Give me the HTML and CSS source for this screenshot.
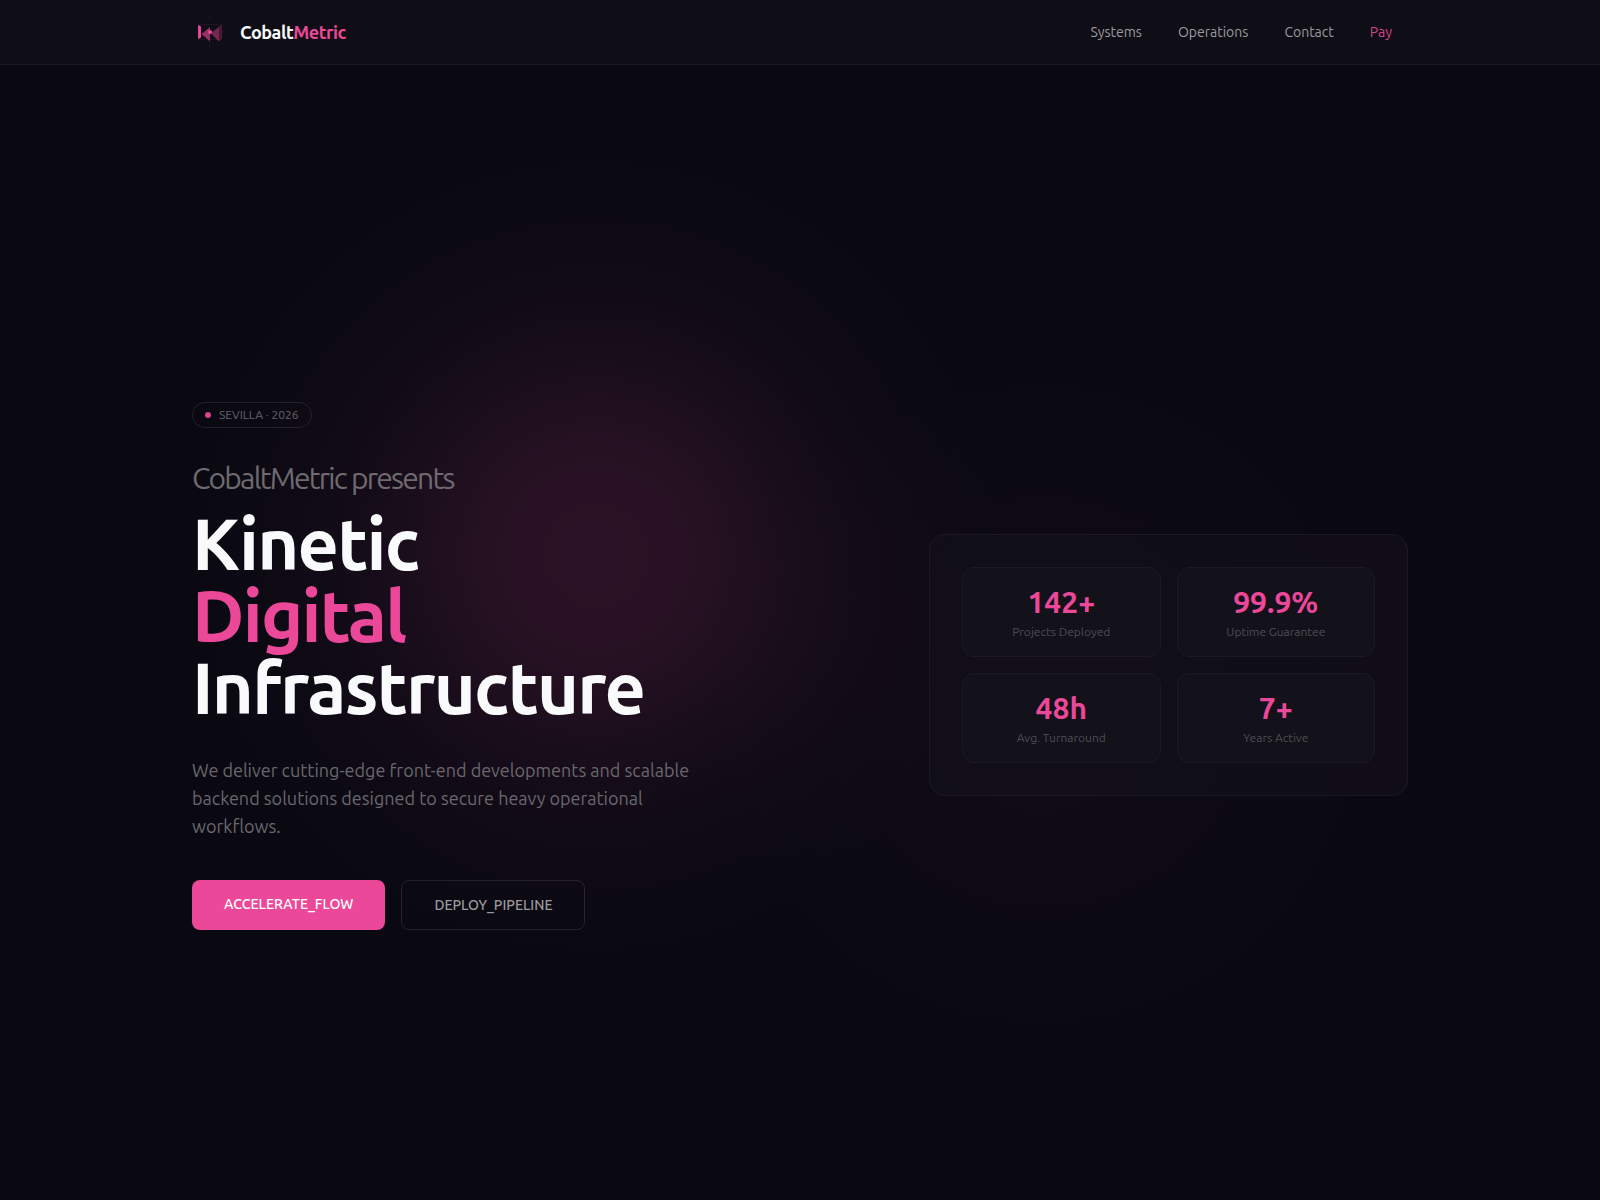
FILE: index.html
```html
<!DOCTYPE html>
<html lang="en">
<head>
<meta charset="utf-8">
<meta name="viewport" content="width=device-width, initial-scale=1">
<title>CobaltMetric</title>
<link rel="stylesheet" href="styles.css">
</head>
<body>
<header class="site-header">
  <div class="container header-row">
    <a class="brand" href="#">
      <svg class="brand-mark" viewBox="0 0 36 36" aria-hidden="true">
        <rect x="8" y="10.500" width="21" height="15" fill="none" stroke="#ec4899" stroke-opacity=".1"/>
        <path d="M18 3v2.500M18 30.500v2.500M3 18h2.500M30.500 18h2.500" stroke="#ec4899" stroke-opacity=".07" stroke-width="2"/>
        <path d="M6 11l3 1.500v11L6 25z" fill="#ec4899"/>
        <path d="M9.500 20L18 13v14.500z" fill="#ec4899" fill-opacity=".6"/>
        <path d="M18.500 19L30 10.500v14L27 27.500z" fill="#ec4899" fill-opacity=".22"/>
        <path d="M19 19.500L27 13v14.500z" fill="#ec4899" fill-opacity=".3"/>
        <circle cx="18" cy="18" r="2" fill="#ec4899"/>
      </svg>
      <span class="brand-name">Cobalt<span class="accent">Metric</span></span>
    </a>
    <nav class="site-nav" aria-label="Main">
      <a href="#systems">Systems</a>
      <a href="#operations">Operations</a>
      <a href="#contact">Contact</a>
      <a class="accent" href="#pay">Pay</a>
    </nav>
  </div>
</header>
<main class="hero">
  <div class="container hero-grid">
    <section class="intro">
      <p class="badge"><span class="badge-dot"></span>SEVILLA · 2026</p>
      <h1 class="title">
        <span class="eyebrow">CobaltMetric presents</span>
        <span class="line">Kinetic</span>
        <span class="line accent">Digital</span>
        <span class="line">Infrastructure</span>
      </h1>
      <p class="lead">We deliver cutting-edge front-end developments and scalable backend solutions designed to secure heavy operational workflows.</p>
      <div class="actions">
        <button class="button primary" type="button">ACCELERATE_FLOW</button>
        <button class="button secondary" type="button">DEPLOY_PIPELINE</button>
      </div>
    </section>
    <dl class="stats">
      <div class="stat"><dd>142+</dd><dt>Projects Deployed</dt></div>
      <div class="stat"><dd>99.9%</dd><dt>Uptime Guarantee</dt></div>
      <div class="stat"><dd>48h</dd><dt>Avg. Turnaround</dt></div>
      <div class="stat"><dd>7+</dd><dt>Years Active</dt></div>
    </dl>
  </div>
</main>
</body>
</html>
```

FILE: styles.css
```css
* { box-sizing: border-box; }

body {
  margin: 0;
  min-height: 100vh;
  display: flex;
  flex-direction: column;
  color: #f9fafb;
  background-color: #0a0912;
  background-image:
    radial-gradient(circle at 596px 556px, rgba(236, 72, 153, .145) 0, rgba(236, 72, 153, .14) 50px, rgba(236, 72, 153, .125) 100px, rgba(236, 72, 153, .098) 150px, rgba(236, 72, 153, .068) 200px, rgba(236, 72, 153, .04) 250px, rgba(236, 72, 153, .018) 300px, rgba(236, 72, 153, .006) 350px, transparent 410px),
    radial-gradient(circle at 1042px 704px, rgba(236, 72, 153, .03) 0, rgba(236, 72, 153, .025) 100px, rgba(236, 72, 153, .012) 200px, rgba(236, 72, 153, .003) 300px, transparent 340px);
  font-family: Ubuntu, "Noto Sans", "Open Sans", sans-serif;
  font-size: 14px;
}

p, h1, dl, dd { margin: 0; }
a { color: inherit; text-decoration: none; }
.accent { color: #ec4899; }

.container {
  width: 100%;
  max-width: 1280px;
  margin: 0 auto;
  padding: 0 32px;
}

.site-header {
  background: #0f0e16;
  border-bottom: 1px solid #1b1a22;
}

.header-row {
  height: 64px;
  display: flex;
  align-items: center;
  justify-content: space-between;
}

.brand { display: flex; align-items: center; gap: 12px; }
.brand-mark { width: 36px; height: 36px; }
.brand-name { font-size: 18px; font-weight: 700; letter-spacing: -0.025em; }

.site-nav { display: flex; gap: 4px; color: #9b9a9f; }
.site-nav a { padding: 8px 16px; line-height: 20px; }
.site-nav .accent { color: #d8438d; }

.hero {
  flex: 1;
  display: flex;
  align-items: center;
  padding: 64px 0 0;
}

.hero-grid {
  display: grid;
  grid-template-columns: minmax(0, 673px) minmax(0, 479px);
  gap: 64px;
  align-items: center;
}

.intro { padding-top: 2px; }

.badge {
  display: flex;
  width: fit-content;
  align-items: center;
  gap: 8px;
  padding: 4px 12px;
  border: 1px solid #242229;
  border-radius: 13px;
  color: #66646b;
  font-size: 12px;
  line-height: 16px;
}
.badge-dot { width: 6px; height: 6px; border-radius: 50%; background: #d8438d; }

.title {
  margin-top: 32px;
  font-size: 72px;
  line-height: 72px;
  font-weight: 700;
  letter-spacing: -0.025em;
}
.title span { display: block; }
.title .eyebrow {
  margin-bottom: 12px;
  color: #6e6a70;
  font-size: 30px;
  line-height: 36px;
  font-weight: 400;
}

.lead {
  max-width: 512px;
  margin-top: 32px;
  color: #69676d;
  font-size: 18px;
  line-height: 28px;
}

.actions { display: flex; gap: 16px; margin-top: 40px; }
.button {
  height: 50px;
  padding: 0 32px;
  border: 0;
  border-radius: 8px;
  font: 500 14px/20px Ubuntu, "Noto Sans", "Open Sans", sans-serif;
}
.primary { padding-bottom: 2px; background: #ec4899; color: #fff; }
.secondary { background: transparent; border: 1px solid #242329; color: #9b9a9f; }

.stats {
  display: grid;
  grid-template-columns: 1fr 1fr;
  gap: 16px;
  padding: 32px;
  border: 1px solid #1a1821;
  border-radius: 16px;
  background: rgba(17, 15, 24, .8);
}
.stat {
  display: flex;
  flex-direction: column;
  align-items: center;
  gap: 4px;
  padding: 16px;
  border: 1px solid #1b1a22;
  border-radius: 12px;
  background: #13111a;
}
.stat dd { color: #ec4899; font-size: 30px; line-height: 36px; font-weight: 700; }
.stat dt { color: #4f4e54; font-size: 12px; line-height: 16px; }
```
